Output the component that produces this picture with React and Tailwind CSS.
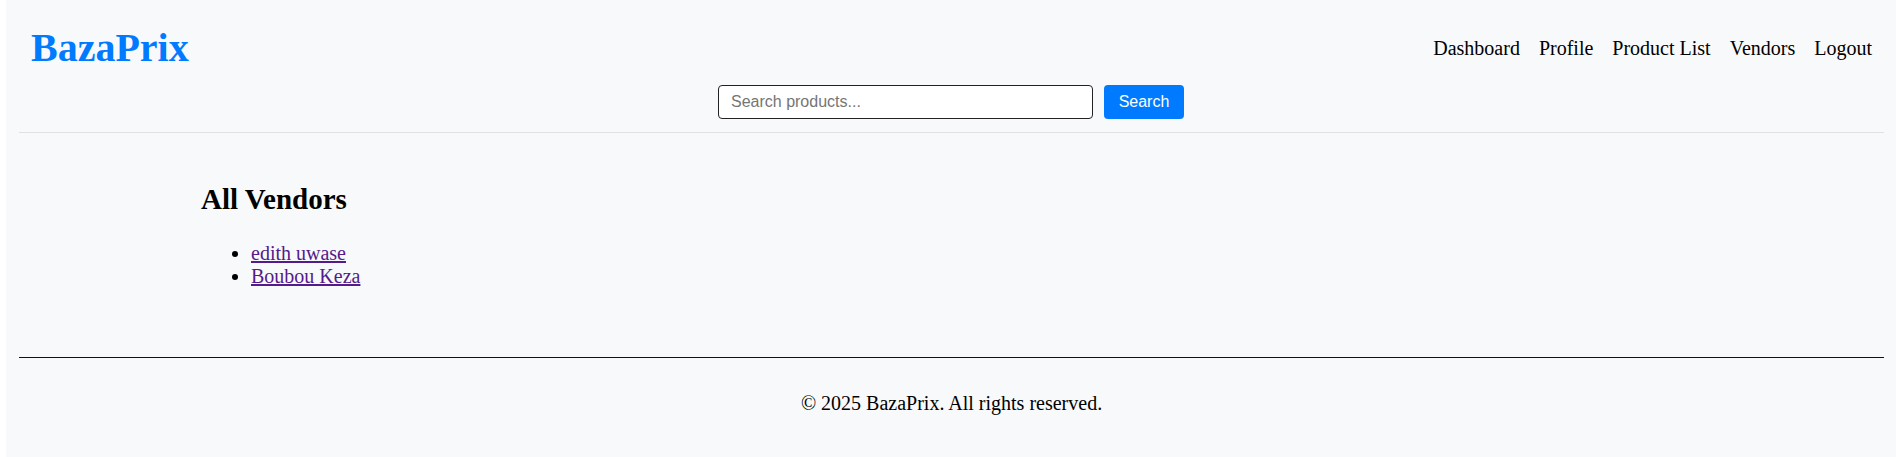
import React from "react";

export default function App() {
  const serif = { fontFamily: '"Liberation Serif", "Times New Roman", serif' };
  const navItems = ["Dashboard", "Profile", "Product List", "Vendors", "Logout"];
  return (
    <div className="bg-white px-[6px]" style={serif}>
      <div className="bg-[#f8f9fa] h-[457px] flex flex-col text-black">
        <header className="ml-[13px] mr-[12px] pt-[26px] pl-[12px] pr-[12px] pb-[13px] border-b border-[#dee2e6]">
          <div className="flex items-center justify-between h-[44px]">
            <h1 className="text-[40px] leading-[44px] font-bold text-[#007bff] m-0">BazaPrix</h1>
            <nav className="flex gap-[19px] text-[20px] leading-[23px]">
              {navItems.map((n) => (
                <a key={n} className="text-black no-underline cursor-pointer">{n}</a>
              ))}
            </nav>
          </div>
          <div className="mt-[15px] flex justify-center items-center gap-[11px] ml-[-1px]">
            <input
              type="text"
              placeholder="Search products..."
              className="w-[375px] h-[34px] border border-[#222] rounded-[4px] bg-white px-[12px] text-[16px] placeholder:text-[#757575] outline-none"
              style={{ fontFamily: '"Liberation Sans", Arial, sans-serif' }}
            />
            <button
              className="w-[80px] h-[34px] rounded-[4px] bg-[#007bff] text-white text-[16px]"
              style={{ fontFamily: '"Liberation Sans", Arial, sans-serif' }}
            >
              Search
            </button>
          </div>
        </header>
        <main className="w-full max-w-[1500px] mx-auto pt-[50px]">
          <h2 className="text-[29px] leading-[33px] font-bold">All Vendors</h2>
          <ul className="list-disc pl-[50px] mt-[26px] text-[20px] leading-[23px]">
            <li><a className="text-[#551a8b] underline cursor-pointer">edith uwase</a></li>
            <li><a className="text-[#551a8b] underline cursor-pointer">Boubou Keza</a></li>
          </ul>
        </main>
        <footer className="mt-[69px] ml-[13px] mr-[12px] border-t border-[#111] pt-[34px] text-center text-[20px] leading-[23px]">
          <p>© 2025 BazaPrix. All rights reserved.</p>
        </footer>
      </div>
    </div>
  );
}
